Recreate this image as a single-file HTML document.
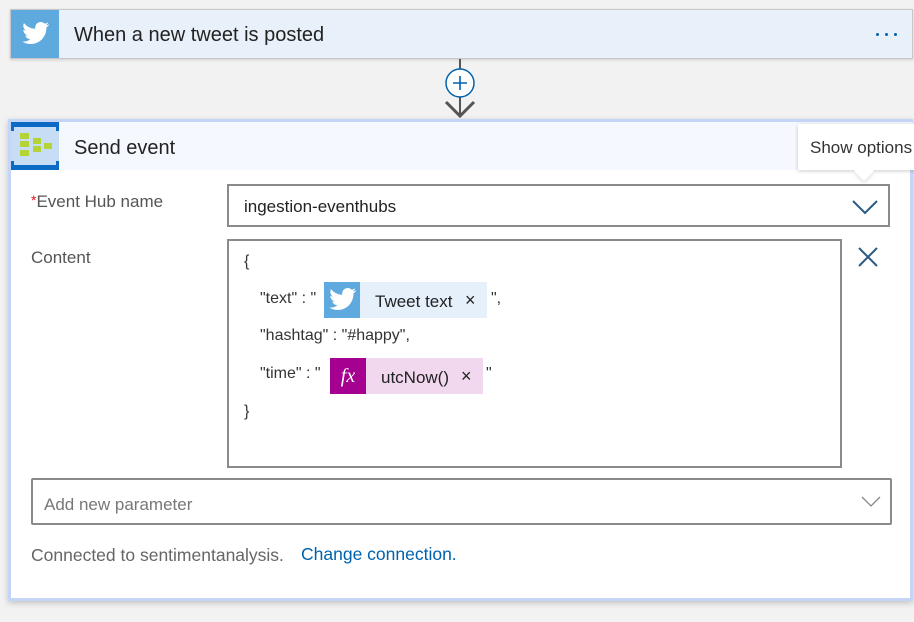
<!DOCTYPE html>
<html><head><meta charset="utf-8"><style>
*{margin:0;padding:0;box-sizing:border-box}
body{width:914px;height:622px;background:#f2f2f2;font-family:"Liberation Sans",sans-serif;position:relative;overflow:hidden;color:#333}
.abs{position:absolute}
.dot{position:absolute;width:3px;height:3px;border-radius:50%;background:#0062ad;top:33px}
</style></head><body>
<!-- trigger card -->
<div class="abs" style="left:10px;top:9px;width:903px;height:50px;background:#e8f1fa;border:1px solid #c8c8c8;box-shadow:0 1px 3px rgba(0,0,0,.15)"></div>
<div class="abs" style="left:11px;top:10px;width:48px;height:48px;background:#5ea9dd">
<svg width="48" height="48" viewBox="0 0 48 48"><path fill="#fff" d="M38 14.5c-1 .5-2.1.8-3.2.9 1.2-.7 2-1.8 2.4-3-1.1.6-2.3 1.1-3.5 1.3-1-1.1-2.5-1.7-4-1.7-3.1 0-5.5 2.5-5.5 5.5 0 .4 0 .9.1 1.3-4.6-.2-8.6-2.4-11.3-5.7-.5.8-.7 1.8-.7 2.8 0 1.9 1 3.6 2.5 4.6-.9 0-1.8-.3-2.5-.7v.1c0 2.7 1.9 4.9 4.4 5.4-.5.1-1 .2-1.5.2-.4 0-.7 0-1-.1.7 2.2 2.7 3.8 5.2 3.8-1.9 1.5-4.3 2.4-6.9 2.4-.4 0-.9 0-1.3-.1 2.5 1.6 5.4 2.5 8.5 2.5 10.2 0 15.7-8.4 15.7-15.7v-.7c1.1-.8 2-1.7 2.8-2.8z"/></svg></div>
<div class="abs" style="left:74px;top:24px;font-size:20px;color:#222">When a new tweet is posted</div>
<div class="dot" style="left:876px"></div><div class="dot" style="left:885px"></div><div class="dot" style="left:894px"></div>
<!-- connector -->
<div class="abs" style="left:459px;top:59px;width:2px;height:56px;background:#555"></div>
<svg class="abs" style="left:444px;top:66px" width="32" height="54" viewBox="0 0 32 54">
<circle cx="16" cy="17" r="14" fill="#fff" stroke="#0062ad" stroke-width="1.5"/>
<path d="M16 10v14M9 17h14" stroke="#0062ad" stroke-width="1.6"/>
<path d="M2 36l14 14 14-14" fill="none" stroke="#555" stroke-width="3"/>
</svg>
<!-- send event card -->
<div class="abs" style="left:8px;top:119px;width:905px;height:482px;background:#fff;border:3px solid #c5d5f8;box-shadow:0 2px 6px rgba(0,0,0,.2)"></div>
<div class="abs" style="left:11px;top:122px;width:902px;height:48px;background:#f5f8fe"></div>
<div class="abs" style="left:11px;top:122px;width:48px;height:48px;background:#c7dcf5">
<svg width="48" height="48" viewBox="0 0 48 48">
<g fill="#0b6ac3"><rect x="0" y="0" width="48" height="5"/><rect x="0" y="43" width="48" height="5"/>
<rect x="0" y="0" width="3" height="9"/><rect x="45" y="0" width="3" height="9"/><rect x="0" y="39" width="3" height="9"/><rect x="45" y="39" width="3" height="9"/></g>
<g fill="#b4d335"><rect x="9" y="11" width="9" height="6"/><rect x="9" y="19" width="9" height="6"/><rect x="9" y="28" width="9" height="6"/><rect x="22" y="16" width="8" height="6"/><rect x="22" y="24" width="8" height="6"/><rect x="33" y="21" width="8" height="6"/></g>
</svg></div>
<div class="abs" style="left:74px;top:137px;font-size:20px;color:#222">Send event</div>
<!-- tooltip -->
<div class="abs" style="left:798px;top:124px;width:120px;height:46px;background:#fff;box-shadow:0 1px 4px rgba(0,0,0,.2)"></div>
<div class="abs" style="left:857px;top:164px;width:14px;height:14px;background:#fff;transform:rotate(45deg);box-shadow:2px 2px 3px rgba(0,0,0,.1)"></div>
<div class="abs" style="left:810px;top:138px;font-size:17px;color:#333;white-space:nowrap">Show options</div>
<!-- fields -->
<div class="abs" style="left:31px;top:192px;font-size:17px;color:#555"><span style="color:#e81123;font-size:14px;vertical-align:top">*</span>Event Hub name</div>
<div class="abs" style="left:227px;top:184px;width:663px;height:43px;border:2px solid #8a8a8a;background:#fff"></div>
<div class="abs" style="left:244px;top:197px;font-size:17px;color:#222">ingestion-eventhubs</div>
<svg class="abs" style="left:851px;top:198px" width="28" height="18" viewBox="0 0 28 18"><path d="M2 3l12 12 12-12" fill="none" stroke="#2b5a82" stroke-width="2"/></svg>
<div class="abs" style="left:31px;top:248px;font-size:17px;color:#555">Content</div>
<div class="abs" style="left:227px;top:239px;width:615px;height:229px;border:2px solid #8a8a8a;background:#fff"></div>
<svg class="abs" style="left:857px;top:246px" width="22" height="22" viewBox="0 0 22 22"><path d="M2 2l18 18M20 2L2 20" stroke="#2b5a82" stroke-width="2"/></svg>
<div class="abs" style="left:244px;top:253px;font-size:16px;color:#333">{</div>
<div class="abs" style="left:260px;top:290px;font-size:16px;color:#333">"text" : "</div>
<div class="abs" style="left:324px;top:282px;width:163px;height:36px;background:#e5f0fb"></div>
<div class="abs" style="left:324px;top:282px;width:36px;height:36px;background:#5ea9dd">
<svg width="36" height="36" viewBox="6 6 36 36"><path fill="#fff" d="M38 14.5c-1 .5-2.1.8-3.2.9 1.2-.7 2-1.8 2.4-3-1.1.6-2.3 1.1-3.5 1.3-1-1.1-2.5-1.7-4-1.7-3.1 0-5.5 2.5-5.5 5.5 0 .4 0 .9.1 1.3-4.6-.2-8.6-2.4-11.3-5.7-.5.8-.7 1.8-.7 2.8 0 1.9 1 3.6 2.5 4.6-.9 0-1.8-.3-2.5-.7v.1c0 2.7 1.9 4.9 4.4 5.4-.5.1-1 .2-1.5.2-.4 0-.7 0-1-.1.7 2.2 2.7 3.8 5.2 3.8-1.9 1.5-4.3 2.4-6.9 2.4-.4 0-.9 0-1.3-.1 2.5 1.6 5.4 2.5 8.5 2.5 10.2 0 15.7-8.4 15.7-15.7v-.7c1.1-.8 2-1.7 2.8-2.8z"/></svg></div>
<div class="abs" style="left:375px;top:292px;font-size:17px;color:#222">Tweet text</div>
<div class="abs" style="left:465px;top:290px;font-size:18px;color:#222">×</div>
<div class="abs" style="left:491px;top:290px;font-size:16px;color:#333">",</div>
<div class="abs" style="left:260px;top:327px;font-size:16px;color:#333">"hashtag" : "#happy",</div>
<div class="abs" style="left:260px;top:365px;font-size:16px;color:#333">"time" : "</div>
<div class="abs" style="left:330px;top:358px;width:153px;height:36px;background:#f2d8ee"></div>
<div class="abs" style="left:330px;top:358px;width:36px;height:36px;background:#a5008f;color:#fff;font-family:'Liberation Serif',serif;font-style:italic;font-size:20px;text-align:center;line-height:36px">fx</div>
<div class="abs" style="left:381px;top:368px;font-size:17px;color:#222">utcNow()</div>
<div class="abs" style="left:461px;top:366px;font-size:18px;color:#222">×</div>
<div class="abs" style="left:486px;top:365px;font-size:16px;color:#333">"</div>
<div class="abs" style="left:244px;top:403px;font-size:16px;color:#333">}</div>
<!-- add param -->
<div class="abs" style="left:31px;top:478px;width:861px;height:47px;border:2px solid #8a8a8a;border-radius:2px;background:#fff"></div>
<div class="abs" style="left:44px;top:495px;font-size:17px;color:#777">Add new parameter</div>
<svg class="abs" style="left:861px;top:495px" width="20" height="14" viewBox="0 0 20 14"><path d="M1 2l9 9 9-9" fill="none" stroke="#888" stroke-width="1.3"/></svg>
<div class="abs" style="left:31px;top:545px;font-size:17.5px;color:#666">Connected to sentimentanalysis.</div>
<div class="abs" style="left:301px;top:544px;font-size:17.5px;color:#0062ad">Change connection.</div>
</body></html>
